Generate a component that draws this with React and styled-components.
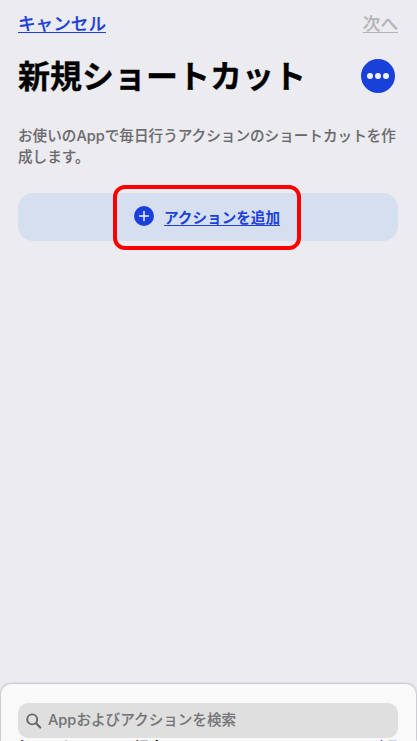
import React from 'react'
import styled, { createGlobalStyle } from 'styled-components';


const GlobalStyle = createGlobalStyle`
    * {
        box-sizing: border-box;
    }
    body {
        margin: 0;
        background: #ebebf0;
        font-family: "Inter", "Noto Sans CJK JP", sans-serif;
        overflow: hidden;
    }
`;

const Screen = styled.div`
    display: flex;
    flex-direction: column;
    height: 741px;
    overflow: hidden;
    background: #ebebf0;
`;

const NavBar = styled.div`
    display: flex;
    justify-content: space-between;
    padding: 10px 19px 0 18px;
    height: 53px;
`;

const NavLink = styled.a`
    font-family: "Noto Sans CJK JP", sans-serif;
    font-size: 17.6px;
    font-weight: 500;
    line-height: 26px;
    color: ${(props) => (props.$disabled ? '#b5b5b8' : '#1b41d8')};
    -webkit-text-stroke: 0.2px currentColor;
    text-decoration: underline;
    text-decoration-thickness: 1px;
    text-underline-offset: 2px;
    cursor: pointer;
`;

const TitleRow = styled.div`
    display: flex;
    align-items: center;
    justify-content: space-between;
    height: 45px;
    padding: 0 22px 0 18px;
`;

const Title = styled.h1`
    margin: 0;
    padding-bottom: 2px;
    font-family: "Noto Sans CJK JP", sans-serif;
    font-size: 32px;
    font-weight: 700;
    line-height: 43px;
    color: #000;
    white-space: nowrap;
    -webkit-text-stroke: 0.3px #000;
`;

const MoreButton = styled.button`
    display: flex;
    flex-shrink: 0;
    align-items: center;
    justify-content: center;
    gap: 2px;
    width: 34px;
    height: 34px;
    padding: 0;
    border: none;
    border-radius: 50%;
    background: #1940d8;
`;

const Dot = styled.span`
    width: 6px;
    height: 6px;
    border-radius: 50%;
    background: #f2f3fa;
`;

const Description = styled.p`
    margin: 28px 16px 0 18px;
    font-size: 14.6px;
    font-weight: 500;
    line-height: 21px;
    color: #6a6a6d;
    -webkit-text-stroke: 0.1px currentColor;
`;

const AddCard = styled.div`
    display: flex;
    justify-content: center;
    align-items: center;
    height: 48px;
    margin: 25px 19px 0 18px;
    border-radius: 15px;
    background: #d6dff0;
`;

const Highlight = styled.div`
    display: flex;
    align-items: center;
    flex-shrink: 0;
    gap: 10px;
    width: 188px;
    height: 65px;
    margin-right: 2px;
    padding: 0 0 2px 17px;
    border: 4px solid #ff0000;
    border-radius: 12px;
`;

const AddLink = styled.a`
    font-family: "Noto Sans CJK JP", sans-serif;
    font-size: 14.6px;
    font-weight: 700;
    line-height: 21px;
    color: #1b41d8;
    text-decoration: underline;
    text-decoration-thickness: 1px;
    text-underline-offset: 2px;
    white-space: nowrap;
    cursor: pointer;
`;

const Sheet = styled.div`
    flex-shrink: 0;
    height: 57px;
    margin: auto 1px 0;
    padding: 19px 18px 0 17px;
    border-radius: 10px 10px 0 0;
    background: #f9f9f9;
    box-shadow: 0 0 3px rgba(0, 0, 0, 0.35);
    overflow: hidden;
`;

const SearchBox = styled.div`
    display: flex;
    align-items: center;
    gap: 6px;
    height: 35px;
    padding: 0 0 0 8px;
    border-radius: 10px;
    background: #dfdfdf;
    font-size: 14.6px;
    font-weight: 500;
    color: #747477;
    -webkit-text-stroke: 0.1px currentColor;
`;

const Placeholder = styled.span`
    padding-bottom: 2px;
    line-height: 20px;
`;

const SuggestionRow = styled.div`
    display: flex;
    justify-content: space-between;
    margin-top: 1px;
    margin-left: -3px;
    font-family: "Noto Sans CJK JP", sans-serif;
    font-weight: 700;
    line-height: 15px;
    font-size: 15px;
    color: #000;
`;

const ShowAll = styled.span`
    font-size: 11px;
    line-height: 12px;
    color: #1b41d8;
`;

const PlusIcon = () => (
    <svg width="20" height="20" viewBox="0 0 20 20">
        <circle cx="10" cy="10" r="10" fill="#1940d8" />
        <path d="M10 5.6v8.8M5.6 10h8.8" stroke="#f2f5fb" strokeWidth="1.5" strokeLinecap="round" />
    </svg>
)

const SearchIcon = () => (
    <svg width="16" height="16" viewBox="0 0 16 16" fill="none" stroke="#66666b" strokeLinecap="round">
        <circle cx="6.2" cy="6.4" r="5" strokeWidth="1.9" />
        <path d="M10.1 10.3l4.1 4.2" strokeWidth="2.2" />
    </svg>
)

const App = () => {
  return (
    <Screen>
        <GlobalStyle />
        <NavBar>
            <NavLink>キャンセル</NavLink>
            <NavLink $disabled>次へ</NavLink>
        </NavBar>
        <TitleRow>
            <Title>新規ショートカット</Title>
            <MoreButton>
                <Dot />
                <Dot />
                <Dot />
            </MoreButton>
        </TitleRow>
        <Description>お使いのAppで毎日行うアクションのショートカットを作成します。</Description>
        <AddCard>
            <Highlight>
                <PlusIcon />
                <AddLink>アクションを追加</AddLink>
            </Highlight>
        </AddCard>
        <Sheet>
            <SearchBox>
                <SearchIcon />
                <Placeholder>Appおよびアクションを検索</Placeholder>
            </SearchBox>
            <SuggestionRow>
                <span>次のアクションの提案</span>
                <ShowAll>表示</ShowAll>
            </SuggestionRow>
        </Sheet>
    </Screen>
  )
}

export default App
